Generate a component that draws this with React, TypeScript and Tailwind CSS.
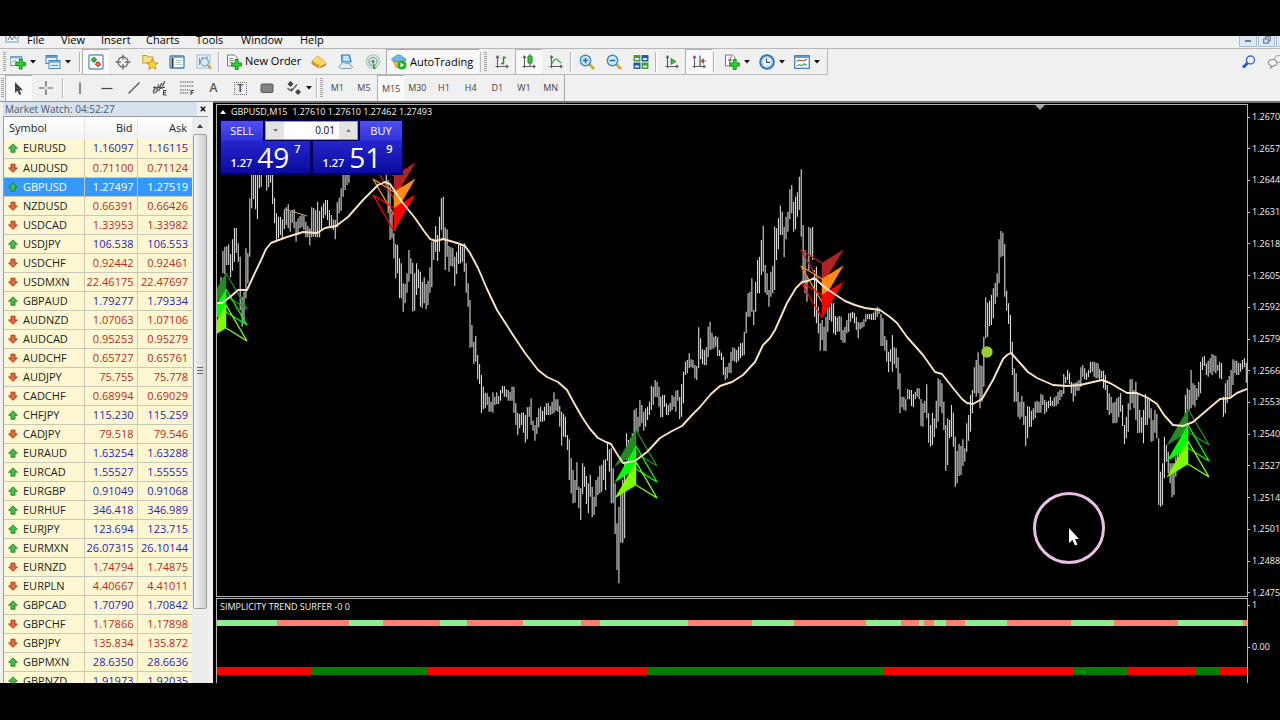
import type { ReactNode } from 'react';

type Quote = [symbol: string, bid: string, ask: string, up: boolean];

const quotes: Quote[] = [
  ['EURUSD', '1.16097', '1.16115', true],
  ['AUDUSD', '0.71100', '0.71124', false],
  ['GBPUSD', '1.27497', '1.27519', true],
  ['NZDUSD', '0.66391', '0.66426', false],
  ['USDCAD', '1.33953', '1.33982', false],
  ['USDJPY', '106.538', '106.553', true],
  ['USDCHF', '0.92442', '0.92461', false],
  ['USDMXN', '22.46175', '22.47697', false],
  ['GBPAUD', '1.79277', '1.79334', true],
  ['AUDNZD', '1.07063', '1.07106', false],
  ['AUDCAD', '0.95253', '0.95279', false],
  ['AUDCHF', '0.65727', '0.65761', false],
  ['AUDJPY', '75.755', '75.778', false],
  ['CADCHF', '0.68994', '0.69029', false],
  ['CHFJPY', '115.230', '115.259', true],
  ['CADJPY', '79.518', '79.546', false],
  ['EURAUD', '1.63254', '1.63288', true],
  ['EURCAD', '1.55527', '1.55555', true],
  ['EURGBP', '0.91049', '0.91068', true],
  ['EURHUF', '346.418', '346.989', true],
  ['EURJPY', '123.694', '123.715', true],
  ['EURMXN', '26.07315', '26.10144', true],
  ['EURNZD', '1.74794', '1.74875', false],
  ['EURPLN', '4.40667', '4.41011', false],
  ['GBPCAD', '1.70790', '1.70842', true],
  ['GBPCHF', '1.17866', '1.17898', false],
  ['GBPJPY', '135.834', '135.872', false],
  ['GBPMXN', '28.6350', '28.6636', true],
  ['GBPNZD', '1.91973', '1.92035', true],
];

const priceLabels = [
  '1.2670', '1.2657', '1.2644', '1.2631', '1.2618', '1.2605', '1.2592', '1.2579',
  '1.2566', '1.2553', '1.2540', '1.2527', '1.2514', '1.2501', '1.2488', '1.2475',
];

const menus = [
  ['File', 'w-[34px]'],
  ['View', 'w-10'],
  ['Insert', 'w-[45px]'],
  ['Charts', 'w-[50px]'],
  ['Tools', 'w-[45px]'],
  ['Window', 'w-[59px]'],
  ['Help', 'w-10'],
];

const timeframes = ['M1', 'M5', 'M15', 'M30', 'H1', 'H4', 'D1', 'W1', 'MN'];

/**
 * A run of evenly spaced bars between x0 and x1. `v` holds high/low pairs,
 * measured down from `top` in thirds of a unit.
 */
interface BarRun {
  x0: number;
  x1: number;
  top: number;
  v: number[];
}

const barRuns: BarRun[] = [
  {
    x0: 221, x1: 261.3, top: 150,
    v: [380,430, 303,370, 290,372, 289,345, 283,345, 312,382, 268,362, 234,335, 234,308, 280,335, 320,480,
      440,530, 425,520, 295,445, 310,400, 145,320, 60,175, 60,148, 60,178, 60,207, 60,115, 60,110],
  },
  {
    x0: 266.7, x1: 349, top: 150,
    v: [60,122, 60,112, 60,98, 60,162, 143,220, 190,272, 200,265, 200,255, 208,265, 180,238, 172,225, 163,235,
      185,245, 180,218, 178,235, 215,275, 205,255, 198,235, 195,232, 198,240, 215,262, 228,262, 235,286,
      172,262, 174,260, 180,262, 155,262, 182,262, 170,240, 160,205, 150,195, 150,210, 180,232, 195,235,
      208,240, 210,268, 157,232, 143,190, 115,182, 60,140, 60,120, 60,105, 60,98],
  },
  {
    x0: 386.3, x1: 399.5, top: 150,
    v: [60,108, 90,190, 110,270, 190,265, 250,325, 282,385, 285,370, 325,445],
  },
  {
    x0: 401.3, x1: 659, top: 160,
    v: [310,415, 370,455, 372,430, 340,398, 270,365, 295,342, 308,455, 340,452, 310,405, 328,385, 335,440,
      365,443, 352,430, 372,448, 362,435, 322,398, 245,382, 240,300, 198,275, 225,303, 170,275, 115,210,
      110,240, 202,330, 208,290, 258,335, 262,318, 265,320, 290,378, 275,342, 255,312, 255,310, 260,305,
      250,335, 310,398, 370,440, 420,563, 495,562, 545,612, 528,605, 585,658, 612,672, 645,760, 680,748,
      698,745, 700,735, 710,755, 725,755, 697,758, 710,735, 697,732, 708,732, 690,722, 678,700, 678,710,
      688,712, 690,722, 695,722, 680,722, 680,758, 730,795, 758,825, 762,805, 758,795, 757,818, 765,848,
      742,838, 740,770, 715,795, 782,812, 795,842, 772,822, 745,802, 740,785, 752,785, 740,782, 730,765,
      728,765, 738,765, 725,762, 697,760, 718,752, 718,755, 738,800, 755,857, 762,830, 770,832, 825,870,
      838,960, 895,1000, 930,1030, 960,1028, 907,990, 980,1045, 985,1080, 910,1002, 920,980, 948,1032,
      970,1060, 945,1010, 980,1072, 1010,1065, 960,1040, 950,1005, 918,1000, 915,995, 900,960, 898,990,
      850,902, 868,935, 865,1030, 925,1030, 970,1122, 1090,1230, 1040,1270, 1000,1148, 960,1148, 905,1135,
      820,900, 840,900, 835,880, 820,860, 750,840, 745,815, 770,815, 720,800, 735,790, 755,812, 745,800,
      740,780, 725,765, 677,750, 680,735, 660,710, 665,712, 680,740],
  },
  {
    x0: 660.7, x1: 900, top: 160,
    v: [710,772, 705,772, 705,740, 730,765, 735,765, 728,755, 705,750, 710,740, 692,755, 690,722, 710,778,
      672,770, 635,730, 605,645, 600,640, 580,625, 598,622, 600,625, 615,655, 618,660, 502,625, 535,598,
      568,612, 570,615, 562,615, 500,592, 485,570, 518,568, 530,565, 528,560, 532,588, 570,588, 578,600,
      590,645, 622,660, 620,655, 608,638, 575,640, 562,602, 565,605, 570,608, 560,602, 550,595, 548,588,
      515,585, 455,520, 400,470, 395,470, 355,455, 450,495, 365,455, 300,400, 290,400, 240,345, 197,335,
      315,398, 340,405, 390,440, 335,410, 318,400, 200,390, 205,300, 175,268, 137,225, 155,225, 200,292,
      170,238, 155,215, 88,178, 75,160, 125,215, 110,208, 97,170, 50,150, 28,230, 195,370, 270,400,
      350,425, 200,330, 205,290, 200,300, 330,470, 320,490, 440,520, 490,572, 480,540, 500,573, 470,573,
      440,515, 440,480, 428,485, 430,520, 468,525, 472,515, 468,515, 470,540, 510,548, 500,548, 480,520,
      460,515, 458,485, 455,475, 458,490, 470,510, 485,535, 488,508, 485,505, 478,500, 463,485, 462,478,
      462,478, 462,480, 458,480, 452,480, 440,470, 445,462, 462,558, 475,558, 528,572, 540,605, 575,637,
      568,605, 525,635, 562,612, 565,625, 592,688, 640,760],
  },
  {
    x0: 902, x1: 1098, top: 200,
    v: [590,622, 590,630, 597,632, 567,598, 570,598, 570,618, 582,622, 575,598, 565,590, 565,598, 597,678,
      610,680, 602,638, 553,655, 640,728, 675,740, 638,735, 655,712, 602,685, 535,665, 540,620, 550,640,
      605,690, 675,812, 655,795, 660,715, 615,710, 638,740, 710,860, 752,850, 732,828, 738,825, 718,798,
      745,785, 670,755, 645,722, 585,695, 570,640, 502,580, 480,590, 457,580, 495,625, 498,605, 410,560,
      292,415, 308,410, 302,378, 285,375, 265,355, 248,312, 220,290, 118,250, 93,172, 98,168, 132,290,
      272,332, 310,372, 345,460, 425,525, 505,605, 520,605, 575,650, 605,658, 588,650, 605,675, 648,738,
      618,715, 620,680, 632,680, 625,660, 605,655, 602,638, 605,638, 582,638, 585,615, 600,642, 605,635,
      602,625, 590,618, 602,618, 592,620, 588,618, 575,612, 570,600, 570,590, 522,582, 530,550, 510,540,
      518,552, 545,580, 550,605, 548,588, 545,572, 540,572, 502,560, 495,530, 505,538, 518,540, 510,532,
      485,520, 485,515, 485,530, 488,535, 490,535],
  },
  {
    x0: 1099.7, x1: 1246.3, top: 330,
    v: [118,150, 122,145, 122,175, 135,180, 165,240, 190,255, 200,250, 218,280, 215,280, 205,278, 200,262,
      190,245, 225,288, 285,342, 260,325, 220,305, 148,240, 147,220, 180,235, 155,270, 190,310, 240,308,
      262,308, 240,340, 192,285, 205,285, 210,265, 235,335, 270,333, 240,308, 252,325, 325,525, 425,530,
      400,525, 320,445, 345,395, 365,430, 400,460, 400,502, 400,495, 380,440, 350,420, 330,400, 300,370,
      280,350, 195,300, 175,250, 180,240, 120,235, 160,225, 165,230, 175,210, 155,200, 95,190, 82,120,
      78,108, 100,135, 92,140, 85,130, 72,135, 75,125, 78,130, 105,122, 95,145, 100,148, 200,260,
      160,250, 150,220, 138,200, 120,200, 88,165, 92,130, 92,135, 98,135, 100,125, 90,118, 84,112, 98,158],
  },
];

const movingAverage =
  '217,303 222,303 230,297 238,290 247,290 253,277 262,258 266,249 271,243 276,241 287,237 303,232 317,233 325,228 336,226 348,217 ' +
  '363,200 378,185 385,182 390,184 402,202 415,218 424,231 430,239 436,241 443,239 457,243 465,246 470,253 478,268 487,289 497,310 ' +
  '513,335 525,353 538,370 547,377 558,382 567,390 574,403 582,417 590,429 598,438 606,442 611,444 617,454 623,463 635,461 647,452 660,438 ' +
  '672,431 682,426 692,415 700,407 711,394 720,386 732,382 743,375 755,362 763,345 770,338 775,330 787,303 796,288 802,282 808,281 814,278 827,289 ' +
  '845,301 855,305 865,308 880,310 890,317 897,323 907,337 923,355 935,372 942,374 953,388 962,399 967,403 973,404 982,399 ' +
  '993,380 1003,359 1007,355 1011,353 1020,363 1028,372 1037,378 1053,385 1067,386 1080,385 1102,380 1110,383 1127,393 1137,393 1148,398 1157,404 ' +
  '1164,415 1173,425 1183,426 1193,422 1207,410 1220,399 1230,398 1237,393 1247,389';

// [start x, colour] of every stretch; each one runs up to the next
const fastTrend: [number, string][] = [
  [217, '#90ee90'], [277, '#fa8072'], [349, '#90ee90'], [383, '#fa8072'], [440, '#90ee90'], [467, '#fa8072'],
  [523, '#90ee90'], [581, '#fa8072'], [600, '#90ee90'], [688, '#fa8072'], [752, '#90ee90'], [794, '#fa8072'],
  [866, '#90ee90'], [901, '#fa8072'], [919, '#90ee90'], [924, '#fa8072'], [934, '#90ee90'], [946, '#fa8072'],
  [965, '#90ee90'], [1007, '#fa8072'], [1071, '#90ee90'], [1114, '#fa8072'], [1178, '#90ee90'], [1243, '#fa8072'],
];
const slowTrend: [number, string][] = [
  [217, '#ff0000'], [312, '#008000'], [428, '#ff0000'], [647, '#008000'], [884, '#ff0000'],
  [1073, '#008000'], [1128, '#ff0000'], [1195, '#008000'], [1219, '#ff0000'],
];

function barPath({ x0, x1, top, v }: BarRun) {
  const count = v.length / 2;
  const step = (x1 - x0) / (count - 1);
  let d = '';
  for (let i = 0; i < count; i++) {
    const x = (x0 + i * step).toFixed(2);
    d += `M${x} ${(top + v[2 * i] / 3).toFixed(1)}V${(top + v[2 * i + 1] / 3).toFixed(1)}`;
  }
  return d;
}

/** Three stacked arrow heads; `dir` is 1 for buy (pointing up), -1 for sell. */
function Signal({ x, y, dir }: { x: number; y: number; dir: 1 | -1 }) {
  const colors = dir === 1 ? ['#228b22', '#00ff00', '#7fff00'] : ['#b22222', '#ff8c1a', '#ff0000'];
  return (
    <>
      {colors.map((color, i) => {
        const apex = y + i * 16;
        return (
          <g key={color} fill={color} stroke={color}>
            <path d={`M${x} ${apex}L${x - 21 * dir} ${apex + 36 * dir}L${x} ${apex + 23 * dir}Z`} strokeWidth="0.5" />
            <path
              d={`M${x} ${apex}L${x + 21 * dir} ${apex + 36 * dir}L${x} ${apex + 23 * dir}`}
              fill="none"
              strokeWidth="1.4"
            />
          </g>
        );
      })}
    </>
  );
}

function PriceChart() {
  return (
    <svg viewBox="217 105 1030 491" preserveAspectRatio="xMinYMin slice" className="block h-full w-full" aria-label="GBPUSD M15 chart" role="img">
      <g stroke="#dadada" strokeWidth="1.1" fill="none">
        {barRuns.map((run) => (
          <path key={run.x0} d={barPath(run)} />
        ))}
      </g>
      <path d="M284 209L307 216" stroke="#c9b178" strokeWidth="1" />
      <Signal x={226} y={273} dir={1} />
      <Signal x={394} y={199} dir={-1} />
      <Signal x={636} y={430} dir={1} />
      <Signal x={822} y={286} dir={-1} />
      <Signal x={1188} y={409} dir={1} />
      <polyline points={movingAverage} fill="none" stroke="#f8e4c4" strokeWidth="1.9" strokeLinejoin="round" />
      <circle cx="987" cy="352" r="5.7" fill="#9acd32" />
      <path d="M1035 105H1045L1040 110Z" fill="#a0a0a0" />
      <circle cx="1069" cy="528" r="34.5" fill="none" stroke="#e9bfe3" strokeWidth="3" />
      <path d="M1069 528V543L1072.5 540L1075 545.5L1077.5 544.5L1075 539H1079Z" fill="#fff" />
    </svg>
  );
}

function TrendBand({ spans, y, height }: { spans: [number, string][]; y: number; height: number }) {
  return (
    <>
      {spans.map(([x, color], i) => {
        const end = i + 1 < spans.length ? spans[i + 1][0] : 1247;
        return <rect key={x} x={x} y={y} width={end - x} height={height} fill={color} />;
      })}
    </>
  );
}

function TickArrow({ up }: { up: boolean }) {
  return (
    <svg viewBox="0 0 10 10" className="h-[10px] w-[10px]" aria-hidden="true">
      {up ? (
        <path d="M5 .9L9.4 5.2H7V9.2H3V5.2H.6Z" fill="#3fc24a" stroke="#1d7c2b" strokeWidth=".9" />
      ) : (
        <path d="M5 9.3L9.4 5H7V1.2H3V5H.6Z" fill="#e8693a" stroke="#9a3413" strokeWidth=".9" />
      )}
    </svg>
  );
}

function Icon({ children }: { children: ReactNode }) {
  return (
    <svg viewBox="0 0 16 16" className="h-4 w-4 shrink-0" fill="none" aria-hidden="true">
      {children}
    </svg>
  );
}

const Plus = ({ x, y }: { x: number; y: number }) => (
  <path
    d={`M${x - 1.5} ${y - 5}h3v3.5h3.5v3h-3.5v3.5h-3v-3.5h-3.5v-3h3.5z`}
    fill="#2fd32f"
    stroke="#0c8a12"
    strokeWidth=".9"
  />
);

const Axes = () => <path d="M3.5 2V14M1.5 12.5H14M2 4L3.5 2L5 4M12.5 11L14 12.5L12.5 14" stroke="#5c5c5c" strokeWidth="1.1" />;

function ToolButton({ label, pressed, children }: { label: string; pressed?: boolean; children: ReactNode }) {
  return (
    <button
      type="button"
      aria-label={label}
      className={
        pressed
          ? 'flex h-full w-[27px] items-center justify-center border-t border-l border-[#b0b0b0] bg-[#f9f9f9]'
          : 'flex h-full w-[27px] items-center justify-center'
      }
    >
      {children}
    </button>
  );
}

function DropButton({ label, children }: { label: string; children: ReactNode }) {
  return (
    <button type="button" aria-label={label} className="flex h-full w-[35px] items-center gap-1 pl-[2px]">
      {children}
      <svg viewBox="0 0 6 4" className="h-1 w-[6px]" aria-hidden="true">
        <path d="M0 0H6L3 3.6Z" fill="#111" />
      </svg>
    </button>
  );
}

const Separator = () => <div className="mx-px h-5 w-[2px] border-l border-[#b4b4b4] bg-white" />;
const Grip = () => <div className="mx-px h-5 w-[3px] bg-[repeating-linear-gradient(#a3a3a3_0_1px,#f0f0f0_1px_2px)]" />;

function MainToolbar() {
  return (
    <div className="flex h-[27px] items-center border-t border-[#b8b8b8] bg-[#f0f0f0]">
      <div className="flex h-full items-center border-r border-b border-[#b8b8b8]">
        <div className="flex w-2 justify-center"><Grip /></div>
        <DropButton label="New chart">
          <Icon>
            <rect x=".8" y="2.5" width="11" height="9" fill="#fff" stroke="#6a93b8" />
            <path d="M1 3.5H12" stroke="#7fb0dd" strokeWidth="2" />
            <path d="M2.5 8.5L5 6.5L7 8" stroke="#4f9d4f" />
            <Plus x={10.7} y={10} />
          </Icon>
        </DropButton>
        <DropButton label="Profiles">
          <Icon>
            <rect x="1" y="1.5" width="11" height="8" fill="#e8f2fb" stroke="#4682b4" />
            <path d="M1 3H12" stroke="#5b9bd5" strokeWidth="2" />
            <rect x="4" y="6.5" width="11" height="8" fill="#f4f9fd" stroke="#4682b4" />
            <path d="M4 8H15M6 11.5H13" stroke="#5b9bd5" strokeWidth="1.5" />
          </Icon>
        </DropButton>
        <Separator />
        <ToolButton label="Market Watch" pressed>
          <Icon>
            <rect x="1" y="1" width="14" height="14" rx="1" fill="#fff" stroke="#5a9bc4" strokeWidth="1.4" />
            <path d="M6 3L9 6H7.3V8H4.7V6H3Z" fill="#3fc24a" stroke="#1d7c2b" strokeWidth=".8" />
            <path d="M10 13L13 10H11.3V8H8.7V10H7Z" fill="#ee6b4a" stroke="#ad2e17" strokeWidth=".8" />
          </Icon>
        </ToolButton>
        <ToolButton label="Data Window">
          <Icon>
            <circle cx="8" cy="8" r="5" stroke="#6e6e6e" strokeWidth="1.3" />
            <path d="M8 .5V6M8 10V15.5M.5 8H6M10 8H15.5" stroke="#6e6e6e" strokeWidth="1.3" />
          </Icon>
        </ToolButton>
        <ToolButton label="Navigator">
          <Icon>
            <path d="M.8 1.5H5L6 3H11V9H.8Z" fill="#fbe08a" stroke="#c79a2c" />
            <path d="M10.3 5L12 8.7L15.8 9L12.9 11.5L13.8 15.3L10.3 13.3L6.8 15.3L7.7 11.5L4.8 9L8.6 8.7Z" fill="#ffd83c" stroke="#c48a12" strokeWidth=".9" />
          </Icon>
        </ToolButton>
        <ToolButton label="Terminal">
          <Icon>
            <rect x="1" y="2" width="14" height="12" rx="1" fill="#fff" stroke="#3f7db5" strokeWidth="1.3" />
            <path d="M1.5 3H14.5" stroke="#4f94d0" strokeWidth="1.4" />
            <path d="M3.5 4V13.5" stroke="#31383f" strokeWidth="2" />
            <path d="M6.5 6.5H13M6.5 8.5H12M6.5 10.5H13" stroke="#b3c7da" />
          </Icon>
        </ToolButton>
        <ToolButton label="Strategy Tester">
          <Icon>
            <rect x="1" y="1" width="13" height="13" fill="#f2f7fb" stroke="#9ab7d0" />
            <path d="M3.5 4V11M6 2.5V8M11 2V5" stroke="#6b8ba6" />
            <circle cx="8.5" cy="8" r="4" fill="#cfe5f5" fillOpacity=".8" stroke="#7ba2c2" strokeWidth="1.3" />
            <path d="M11.5 11L15 14.8" stroke="#d2a22e" strokeWidth="2.2" />
          </Icon>
        </ToolButton>
        <Separator />
        <button type="button" className="flex h-full w-[84px] items-center gap-[3px] pl-[5px] text-[11px] whitespace-nowrap">
          <Icon>
            <path d="M1.5 1H8.5L11 3.5V12H1.5Z" fill="#fff" stroke="#777" />
            <path d="M3.5 4.5H7.5M3.5 6.5H8M3.5 8.5H6" stroke="#888" />
            <Plus x={10.7} y={10.5} />
          </Icon>
          New Order
        </button>
        <ToolButton label="MetaEditor">
          <Icon>
            <path d="M6.5 2L15 8.5L14 11.5L8 14L.8 9.5L1.5 7Z" fill="#e0a21b" stroke="#a8700c" strokeWidth=".8" />
            <path d="M6.5 2L15 8.5L9 11.5L1.5 7Z" fill="#ffd768" />
            <path d="M8 14L9 11.5L15 8.5" stroke="#fff3c6" strokeWidth=".7" />
          </Icon>
        </ToolButton>
        <ToolButton label="Virtual hosting">
          <Icon>
            <path d="M3.5 1H11.5L13 8H4Z" fill="#9dd0f8" stroke="#2f7cc4" strokeWidth="1.2" />
            <path d="M6 3H10M6.3 5.3H10.8" stroke="#fff" strokeWidth="1.2" />
            <path d="M3.2 14.5C.5 14.5.5 11 3 10.8C3.5 8.2 7 7.8 8.2 10C10 8.5 12.5 9.6 12.3 11.3C15 11.3 15 14.5 12.8 14.5Z" fill="#deeaf5" stroke="#7c9dbb" />
          </Icon>
        </ToolButton>
        <ToolButton label="Signals">
          <Icon>
            <circle cx="8" cy="7.5" r="6.7" fill="#ddebe6" stroke="#a8c4be" strokeWidth="1.1" />
            <circle cx="8" cy="7.5" r="4" stroke="#76a698" strokeWidth="1.2" />
            <path d="M8 7L11 15H8Z" fill="#45a14e" />
            <circle cx="8" cy="7.3" r="1.6" fill="#4a8f6c" />
          </Icon>
        </ToolButton>
        <button
          type="button"
          className="flex h-full w-[93px] items-center gap-[3px] border-t border-l border-[#a8a8a8] bg-[#f8f8f8] pl-[4px] text-[11px] whitespace-nowrap"
        >
          <Icon>
            <path d="M2 7L5 13L10 15L12 8Z" fill="#f0c13a" stroke="#b28318" strokeWidth=".8" />
            <path d="M.5 5.5C2 2.8 4 4 4.8 1.8C7 .2 11 .8 11.5 3.5C14 3.5 15.5 5 15 6.5C10 8.5 5 8.5.5 5.5Z" fill="#72b6e2" stroke="#3d80b2" strokeWidth=".8" />
            <circle cx="11" cy="11" r="4.6" fill="#25b325" />
            <path d="M9.5 8.8V13.2L13.2 11Z" fill="#fff" />
          </Icon>
          AutoTrading
        </button>
        <Separator />
        <Grip />
        <ToolButton label="Bar chart">
          <Icon>
            <Axes />
            <path d="M9.5 2.5V10.5M9.5 3.5H12M7 9.5H9.5" stroke="#2c8a36" strokeWidth="1.4" />
          </Icon>
        </ToolButton>
        <ToolButton label="Candlesticks" pressed>
          <Icon>
            <Axes />
            <path d="M9 0V12" stroke="#1d7c2b" />
            <rect x="7" y="2" width="4" height="7" rx=".5" fill="#35cf3d" stroke="#157c1d" />
          </Icon>
        </ToolButton>
        <ToolButton label="Line chart">
          <Icon>
            <Axes />
            <path d="M4 9.5C6.5 4 9 4 10.5 7L13.5 9" stroke="#3f9a48" strokeWidth="1.2" />
          </Icon>
        </ToolButton>
        <Separator />
        <ToolButton label="Zoom in">
          <Icon>
            <path d="M10 10L15 15" stroke="#d5a52c" strokeWidth="2.8" />
            <circle cx="6.5" cy="6.5" r="5.2" fill="#d3ebfb" stroke="#3d8cc4" strokeWidth="1.5" />
            <path d="M6.5 3.7V9.3M3.7 6.5H9.3" stroke="#1f70b4" strokeWidth="1.6" />
          </Icon>
        </ToolButton>
        <ToolButton label="Zoom out">
          <Icon>
            <path d="M10 10L15 15" stroke="#d5a52c" strokeWidth="2.8" />
            <circle cx="6.5" cy="6.5" r="5.2" fill="#d3ebfb" stroke="#3d8cc4" strokeWidth="1.5" />
            <path d="M3.7 6.5H9.3" stroke="#1f70b4" strokeWidth="1.6" />
          </Icon>
        </ToolButton>
        <ToolButton label="Tile windows">
          <Icon>
            <rect x="0" y=".5" width="16" height="15" fill="#fff" />
            <rect x=".5" y="1" width="7" height="6.5" fill="#4a9c30" />
            <rect x="8.5" y="1" width="7" height="6.5" fill="#2458a0" />
            <rect x=".5" y="8.5" width="7" height="6.5" fill="#2458a0" />
            <rect x="8.5" y="8.5" width="7" height="6.5" fill="#4a9c30" />
            <path d="M2 5H6M10 5H14M2 12.5H6M10 12.5H14" stroke="#dcebf8" strokeWidth="2" />
          </Icon>
        </ToolButton>
        <Separator />
        <ToolButton label="Auto scroll">
          <Icon>
            <Axes />
            <path d="M7 4.5L12 7.5L7 10.5Z" fill="#3dbb46" stroke="#1d7c2b" strokeWidth=".7" />
          </Icon>
        </ToolButton>
        <ToolButton label="Chart shift" pressed>
          <Icon>
            <Axes />
            <path d="M9 1.5V12" stroke="#47627a" strokeWidth="1.3" />
            <path d="M10 7L12.5 4.8V9.2ZM12 7H15" fill="#d0452a" stroke="#d0452a" />
          </Icon>
        </ToolButton>
        <Separator />
        <div className="ml-[6px] flex h-full">
          <DropButton label="Indicators">
            <Icon>
              <path d="M1.5 1H8.5L11 3.5V12H1.5Z" fill="#fff" stroke="#777" />
              <path d="M8 3C5.5 2.5 6.5 5 5.5 9.5M4 6H8" stroke="#555" />
              <Plus x={10.7} y={10.5} />
            </Icon>
          </DropButton>
          <DropButton label="Periods">
            <Icon>
              <circle cx="8" cy="8" r="6.8" fill="#f2f9ff" stroke="#2d74b8" strokeWidth="2" />
              <circle cx="8" cy="8" r="4.9" stroke="#8fc3ec" />
              <path d="M7.5 4.5V8.3H11" stroke="#4a4a4a" strokeWidth="1.2" />
            </Icon>
          </DropButton>
          <DropButton label="Templates">
            <Icon>
              <rect x=".7" y="1.7" width="14.6" height="12.6" fill="#fff" stroke="#3f77aa" strokeWidth="1.2" />
              <path d="M1 3H15" stroke="#5794cc" strokeWidth="1.8" />
              <path d="M2.5 7.5L5.5 6L8 7L13 5.5" stroke="#8a4a3a" strokeWidth="1.1" />
              <path d="M2.5 12L5.5 10.5L8 11.8L10.5 9.8L13 11.5" stroke="#3f9a48" strokeWidth="1.1" />
            </Icon>
          </DropButton>
        </div>
      </div>
      <div className="ml-auto flex items-center gap-[10px] overflow-hidden">
        <button type="button" aria-label="Search">
          <Icon>
            <path d="M7 8.5L2 13.5" stroke="#3858b8" strokeWidth="3" />
            <circle cx="9.5" cy="6" r="4" fill="#eef3ff" stroke="#4468c8" strokeWidth="1.5" />
          </Icon>
        </button>
        <button type="button" aria-label="Chat" className="w-[13px] overflow-hidden">
          <Icon>
            <ellipse cx="12" cy="5" rx="4.5" ry="3.4" fill="#f5f5f5" stroke="#999" />
            <path d="M3.5 14L4 11.5C-.5 10 1 5.5 5.5 5.5C11 5.5 11.5 11.5 6.5 11.8Z" fill="#fafafa" stroke="#8c8c8c" strokeWidth="1.1" />
          </Icon>
        </button>
      </div>
    </div>
  );
}

function DrawingToolbar() {
  return (
    <div className="flex h-[26px] items-center bg-[#f0f0f0] text-[#444]">
      <div className="flex w-[5px] justify-center"><Grip /></div>
      <ToolButton label="Cursor" pressed>
        <Icon>
          <path d="M4 1V12L6.5 9.8L8.3 14L10.3 13.1L8.5 9.2H12Z" fill="#444" />
        </Icon>
      </ToolButton>
      <ToolButton label="Crosshair">
        <Icon>
          <path d="M8 1V6.5M8 9.5V15M1 8H6.5M9.5 8H15" stroke="#555" strokeWidth="1.2" />
        </Icon>
      </ToolButton>
      <div className="flex w-2 justify-center"><Separator /></div>
      <div className="grid h-full w-[213px] grid-cols-8 justify-items-center">
        <ToolButton label="Vertical line">
          <Icon><path d="M8 2.5V14" stroke="#444" strokeWidth="1.2" /></Icon>
        </ToolButton>
        <ToolButton label="Horizontal line">
          <Icon><path d="M2.5 8.5H13.5" stroke="#444" strokeWidth="1.2" /></Icon>
        </ToolButton>
        <ToolButton label="Trendline">
          <Icon><path d="M2.5 13.5L13.5 2.5" stroke="#555" strokeWidth="1.2" /></Icon>
        </ToolButton>
        <ToolButton label="Equidistant channel">
          <Icon>
            <path d="M.5 11L13 2.5M1.5 13.5L10 7.5M3 6L1.5 13M6.5 4L4.5 12.5M9.5 3L7 11M12.5 1L10 9M1 7.5H13" stroke="#505050" />
            <path d="M14.5 10.5H11.5V15H14.5M11.5 12.7H14" stroke="#333" />
          </Icon>
        </ToolButton>
        <ToolButton label="Fibonacci retracement">
          <Icon>
            <path d="M1 2H15M1 6H15M1 10H11" stroke="#555" strokeDasharray="1.5 .8" />
            <path d="M1 13H10" stroke="#555" strokeDasharray="1.5 .8" />
            <path d="M15 10.5H12V15M12 12.7H14.5" stroke="#333" />
          </Icon>
        </ToolButton>
        <ToolButton label="Text">
          <span className="text-xs font-semibold text-[#555]">A</span>
        </ToolButton>
        <ToolButton label="Text label">
          <span className="flex h-[13px] w-[13px] items-center justify-center border border-dotted border-[#666] text-[11px] font-bold text-[#555]">
            T
          </span>
        </ToolButton>
        <ToolButton label="Rectangle">
          <Icon><rect x="2" y="4" width="12" height="8.5" rx="1.2" fill="#828282" stroke="#555" /></Icon>
        </ToolButton>
      </div>
      <div className="ml-1 flex h-full w-[31px]">
        <DropButton label="Arrows">
          <Icon>
            <path d="M4.5 1L7.5 4L4.5 7L1.5 4Z" fill="#444" />
            <path d="M12 9L15 12L12 15L9 12Z" fill="#444" />
            <path d="M5 11.5L11 4.5M1.5 8L4 10.5L6 8.5" stroke="#555" strokeWidth="1.2" />
          </Icon>
        </DropButton>
      </div>
      <Separator />
      <Grip />
      <div className="grid h-full w-60 grid-cols-9">
        {timeframes.map((tf) => (
          <button
            key={tf}
            type="button"
            className={
              tf === 'M15'
                ? 'border-t border-l border-[#b0b0b0] bg-[#fafafa] text-[9px]'
                : 'text-[9px]'
            }
          >
            {tf}
          </button>
        ))}
      </div>
      <div className="h-full border-l border-[#a8a8a8]" />
    </div>
  );
}

function MarketWatch() {
  return (
    <aside className="flex w-[213px] shrink-0 flex-col overflow-hidden border-t border-[#8f8f8f] bg-[#f0f0f0] pl-[3px]">
      <div className="mr-1 flex h-[14px] shrink-0 items-center justify-between bg-[#d6e2ee] pl-[2px] text-[10px] text-[#4c5866]">
        <h2>Market Watch: 04:52:27</h2>
        <button type="button" aria-label="Close" className="flex h-full w-3 items-center justify-center bg-[#f0f0f0]">
          <svg viewBox="0 0 8 8" className="h-[6px] w-[6px]" aria-hidden="true">
            <path d="M1 1L7 7M7 1L1 7" stroke="#111" strokeWidth="2" />
          </svg>
        </button>
      </div>
      <div className="mr-[5px] flex min-h-0 flex-1 border-t border-l border-[#9a9a9a]">
        <div className="min-w-0 flex-1 overflow-hidden bg-white">
          <table className="w-full table-fixed border-collapse text-[11px]">
            <colgroup>
              <col className="w-[80px]" />
              <col className="w-[53px]" />
              <col />
            </colgroup>
            <thead>
              <tr className="h-[22px] bg-linear-to-b from-white to-[#f2f3f5] text-[#222]">
                <th className="border-r border-[#e4e6ea] p-0 pl-[5px] text-left leading-4 font-normal">Symbol</th>
                <th className="border-r border-[#e4e6ea] p-0 pr-1 text-right leading-4 font-normal">Bid</th>
                <th className="p-0 pr-[5px] text-right leading-4 font-normal">Ask</th>
              </tr>
            </thead>
            <tbody>
              {quotes.map(([symbol, bid, ask, up]) => {
                const selected = symbol === 'GBPUSD';
                const price = selected ? 'text-white' : up ? 'text-[#2a1fb4]' : 'text-[#c1271c]';
                return (
                  <tr
                    key={symbol}
                    className={
                      selected
                        ? 'h-[19px] border-b border-[#c8c8b8] bg-[#3399ff] text-white'
                        : 'h-[19px] border-b border-[#c8c8b8] bg-[#fdf8d2] text-[#1c1c1c]'
                    }
                  >
                    <td className="border-r border-[#c8c8b8] p-0 leading-4">
                      <div className="flex items-center gap-[5px] pl-1">
                        <TickArrow up={up} />
                        {symbol}
                      </div>
                    </td>
                    <td className={`border-r border-[#c8c8b8] p-0 pr-[3px] text-right leading-4 ${price}`}>{bid}</td>
                    <td className={`p-0 pr-1 text-right leading-4 ${price}`}>{ask}</td>
                  </tr>
                );
              })}
            </tbody>
          </table>
        </div>
        <div className="flex w-4 flex-col bg-[#ececec] px-px">
          <div className="flex h-[17px] items-center justify-center">
            <svg viewBox="0 0 6 4" className="h-1 w-[6px]" aria-hidden="true">
              <path d="M0 4H6L3 0Z" fill="#444" />
            </svg>
          </div>
          <div className="mb-[74px] flex flex-1 items-center justify-center rounded-xs border border-[#9d9d9d] bg-linear-to-r from-[#f5f5f5] to-[#cfcfd2]">
            <div className="h-[9px] w-[6px] bg-[repeating-linear-gradient(#666_0_1px,transparent_1px_3px)]" />
          </div>
        </div>
      </div>
    </aside>
  );
}

function Deal({ pips, point }: { pips: string; point: string }) {
  return (
    <button
      type="button"
      className="flex h-8 flex-1 items-start justify-center gap-[5px] bg-linear-to-b from-[#2525cc] to-[#0a0aa0] text-white"
    >
      <span className="pt-[14px] text-[11px] leading-4 font-semibold">1.27</span>
      <span className="text-[28px] leading-8">{pips}</span>
      <span className="text-[11px] leading-4 font-semibold">{point}</span>
    </button>
  );
}

function OneClickPanel() {
  return (
    <div className="absolute top-[15px] left-[3px] w-[183px] bg-[#00005a] p-px pb-[2px]">
      <div className="flex h-5 gap-[2px]">
        <button type="button" className="w-[42px] bg-linear-to-b from-[#5050f0] to-[#3030d8] text-[11px] leading-4 text-white">
          SELL
        </button>
        <div className="mb-px flex flex-1 border border-[#999] bg-[#e4e4e4]">
          <button type="button" aria-label="Less volume" className="flex w-[18px] items-center justify-center">
            <svg viewBox="0 0 6 4" className="h-[3px] w-[5px]" aria-hidden="true">
              <path d="M0 0H6L3 4Z" fill="#777" />
            </svg>
          </button>
          <input
            aria-label="Volume"
            defaultValue="0.01"
            className="w-0 flex-1 bg-white pr-1 text-right text-[10px] text-black outline-none"
          />
          <button type="button" aria-label="More volume" className="flex w-[18px] items-center justify-center">
            <svg viewBox="0 0 6 4" className="h-[3px] w-[5px]" aria-hidden="true">
              <path d="M0 4H6L3 0Z" fill="#777" />
            </svg>
          </button>
        </div>
        <button type="button" className="w-[42px] bg-linear-to-b from-[#5050f0] to-[#3030d8] text-[11px] leading-4 text-white">
          BUY
        </button>
      </div>
      <div className="flex gap-[3px]">
        <Deal pips="49" point="7" />
        <Deal pips="51" point="9" />
      </div>
    </div>
  );
}

function AxisLabel({ children }: { children: ReactNode }) {
  return (
    <div className="flex h-[10px] shrink-0 items-center gap-[2px] text-[9px] leading-[10px]">
      <span className="h-px w-[2px] shrink-0 bg-[#c8c8c8]" />
      {children}
    </div>
  );
}

function ChartWindow() {
  return (
    <main className="flex min-w-0 flex-1 flex-col gap-px overflow-hidden border-t-2 border-[#6f6f6f] bg-black pt-px pl-[3px] text-[#f2f2f2]">
      <section className="flex min-h-0 flex-1">
        <div className="relative min-w-0 flex-1 border border-[#b4b4b4]">
          <div className="absolute inset-0">
            <PriceChart />
          </div>
          <p className="absolute top-0 left-[3px] flex items-center gap-1 text-[9px] leading-[13px] whitespace-pre">
            <svg viewBox="0 0 6 4" className="mr-px h-1 w-[6px]" aria-hidden="true">
              <path d="M0 4H6L3 0Z" fill="#fff" />
            </svg>
            GBPUSD,M15  1.27610 1.27610 1.27462 1.27493
          </p>
          <OneClickPanel />
        </div>
        <div className="-mb-px flex w-8 flex-col justify-between pt-2">
          {priceLabels.map((label) => (
            <AxisLabel key={label}>{label}</AxisLabel>
          ))}
        </div>
      </section>
      <section className="flex h-[85px] shrink-0">
        <div className="relative min-w-0 flex-1 border-t border-r border-l border-[#b4b4b4]">
          <svg viewBox="217 599 1030 84" preserveAspectRatio="xMinYMin slice" className="block h-full w-full" aria-label="Trend bands" role="img">
            <TrendBand spans={fastTrend} y={620} height={6} />
            <TrendBand spans={slowTrend} y={667} height={8} />
          </svg>
          <h3 className="absolute top-px left-[3px] text-[9px] leading-[13px]">SIMPLICITY TREND SURFER -0 0</h3>
        </div>
        <div className="flex w-8 flex-col gap-8 pt-[2px]">
          <AxisLabel>1</AxisLabel>
          <AxisLabel>0.00</AxisLabel>
        </div>
      </section>
    </main>
  );
}

export default function App() {
  return (
    <div className="flex h-screen flex-col overflow-hidden bg-black pt-9 pb-[37px] font-['Open_Sans','Noto_Sans',sans-serif] text-black">
      <header className="shrink-0 bg-[#f0f0f0]">
        <nav className="flex h-3 items-start text-[11px] leading-[7px]">
          <div className="flex h-3 w-[27px] items-end overflow-hidden pb-1 pl-1">
            <Icon>
              <rect x="2" y="3" width="12" height="11" fill="#eef5fb" stroke="#6f9cc0" />
              <path d="M2 5H14" stroke="#7fb0dd" strokeWidth="2" />
              <path d="M4 12L6 8L8 12L10.5 8L12.5 11" stroke="#8b6b6b" />
            </Icon>
          </div>
          {menus.map(([name, width]) => (
            <button key={name} type="button" className={`${width} text-left`}>
              {name}
            </button>
          ))}
          <div className="ml-auto flex h-3 gap-px pb-px">
            <button type="button" aria-label="Minimize" className="flex h-full w-[18px] items-center justify-center border-x border-b border-[#a9bccb] bg-[#dce9f4]">
              <span className="h-[2px] w-[6px] bg-[#6b7f92]" />
            </button>
            <button type="button" aria-label="Restore" className="flex h-full w-[17px] items-start justify-center border-x border-b border-[#a9bccb] bg-[#dce9f4]">
              <svg viewBox="0 0 8 8" className="h-2 w-2" fill="none" aria-hidden="true">
                <path d="M2.5 2.5V.8H7.3V5H5.5M.7 3H5.3V7.2H.7Z" stroke="#6b7f92" strokeWidth="1.2" />
              </svg>
            </button>
            <div className="w-1 border-b border-l border-[#a9bccb] bg-[#dce9f4]" />
          </div>
        </nav>
        <MainToolbar />
        <DrawingToolbar />
      </header>
      <div className="flex min-h-0 flex-1">
        <MarketWatch />
        <ChartWindow />
      </div>
    </div>
  );
}
